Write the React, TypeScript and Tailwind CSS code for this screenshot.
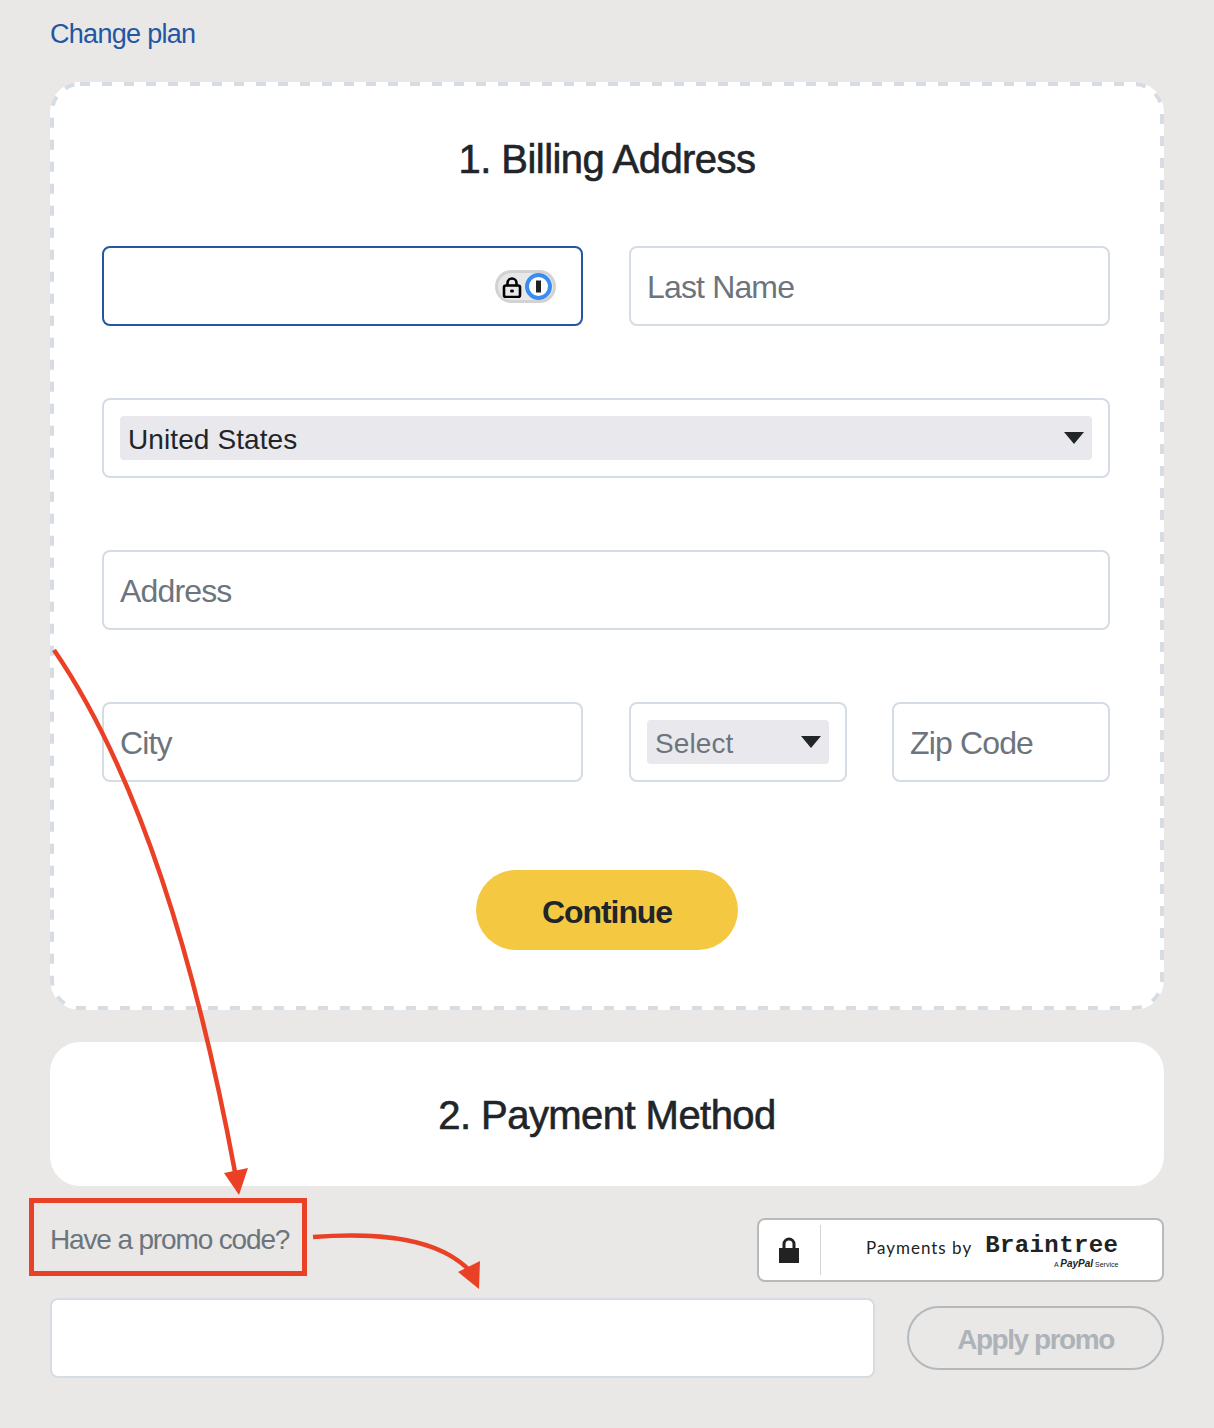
import React from 'react';

const sans = "font-['Liberation_Sans',Arial,sans-serif]";

const Field = ({ placeholder, className = '' }: { placeholder?: string; className?: string }) => (
  <div className={`h-20 rounded-lg border-2 border-[#d6dce3] bg-white px-4 pt-0.5 flex items-center ${className}`}>
    <span className="text-[32px] tracking-[-0.85px] text-[#6c757d]">{placeholder}</span>
  </div>
);

const Caret = () => (
  <svg width="20" height="12" viewBox="0 0 20 12" className="shrink-0">
    <path d="M0 0H20L10 12Z" fill="#212529" />
  </svg>
);

const OnePasswordBadge = () => (
  <div className="absolute right-[25px] top-[22px] flex h-[33px] w-[61px] items-center rounded-full border-[3px] border-[#d2d2d2] bg-[#e8e8e8]">
    <svg width="22" height="22" viewBox="0 0 22 22" className="ml-[3px]">
      <path d="M6.5 10V7a4.5 4.5 0 0 1 9 0v3" fill="none" stroke="#000" strokeWidth="2.6" />
      <rect x="3" y="9.5" width="16" height="11.5" rx="2" fill="none" stroke="#000" strokeWidth="2.6" />
      <rect x="9" y="13.5" width="4" height="3" rx="1.5" fill="#000" />
    </svg>
    <div className="ml-0.5 flex h-[27px] w-[27px] items-center justify-center rounded-full bg-white">
      <svg width="27" height="27" viewBox="0 0 27 27">
        <circle cx="13.5" cy="13.5" r="11.5" fill="#fff" stroke="#3b8cf0" strokeWidth="4" />
        <rect x="11" y="7.5" width="5" height="12" fill="#222" />
      </svg>
    </div>
  </div>
);

// dashed outline with longer dashes than the browser's own dashed border
const DashedOutline = () => (
  <svg className="pointer-events-none absolute left-0 top-0" width="1114" height="928" viewBox="0 0 1114 928">
    <rect x="2" y="2" width="1110" height="924" rx="28" fill="none" stroke="#d6dce3" strokeWidth="4" strokeDasharray="10 12" />
  </svg>
);

// red annotation arrows drawn over the page
const Annotations = () => (
  <svg className="pointer-events-none absolute left-0 top-0" width="1214" height="1428" viewBox="0 0 1214 1428">
    <path d="M54 650C128 758 190 930 235 1172" fill="none" stroke="#ea4126" strokeWidth="4.5" />
    <path d="M239 1195L224 1173L248 1168Z" fill="#ea4126" />
    <path d="M313 1237C380 1232 440 1238 471 1272" fill="none" stroke="#ea4126" strokeWidth="4.5" />
    <path d="M479 1289L458 1272L480 1261Z" fill="#ea4126" />
  </svg>
);

export default function App() {
  return (
    <div className={`relative min-h-[1428px] bg-[#e9e8e6] px-[50px] text-[#212529] ${sans}`}>
      <div className="flex h-[82px] items-start pt-[16px]">
        <a className="text-[27px] leading-9 tracking-[-0.7px] text-[#2356a4]">Change plan</a>
      </div>

      {/* Billing Address */}
      <section className="relative h-[928px] rounded-[30px] bg-white pl-[52px] pr-[54px] pt-[53px]">
        <DashedOutline />
        <h2 className="pl-[2px] text-center text-[40px] leading-[48px] font-normal tracking-[-0.55px] [-webkit-text-stroke:0.6px_#212529]">
          1. Billing Address
        </h2>

        <div className="mt-[63px] flex gap-x-[46px]">
          <div className="relative h-20 w-[481px] rounded-lg border-2 border-[#2356a4] bg-white">
            <OnePasswordBadge />
          </div>
          <Field placeholder="Last Name" className="w-[481px]" />
        </div>

        <div className="mt-[72px] flex h-20 items-center rounded-lg border-2 border-[#d6dce3] bg-white px-4">
          <div className="flex h-11 w-full items-center justify-between rounded bg-[#e8e8ed] pl-2 pr-2">
            <span className="pt-1 text-[28px] tracking-[0.1px]">United States</span>
            <Caret />
          </div>
        </div>

        <Field placeholder="Address" className="mt-[72px]" />

        <div className="mt-[72px] flex">
          <Field placeholder="City" className="w-[481px]" />
          <div className="ml-[46px] flex h-20 w-[218px] items-center rounded-lg border-2 border-[#d6dce3] bg-white px-4">
            <div className="flex h-11 w-full items-center justify-between rounded bg-[#e8e8ed] pl-2 pr-2">
              <span className="pt-1 text-[28px] tracking-[0.1px] text-[#6c757d]">Select</span>
              <Caret />
            </div>
          </div>
          <Field placeholder="Zip Code" className="ml-[45px] w-[218px]" />
        </div>

        <div className="mt-[88px] flex justify-center pl-[2px]">
          <button className="h-20 w-[262px] rounded-full bg-[#f5c842] pt-1 text-[32px] font-bold tracking-[-1.05px]">
            Continue
          </button>
        </div>
      </section>

      {/* Payment Method */}
      <section className="mt-8 flex h-[144px] items-center justify-center rounded-[30px] bg-white pt-0.5">
        <h2 className="text-[40px] leading-[48px] font-normal tracking-[-0.55px] [-webkit-text-stroke:0.6px_#212529]">
          2. Payment Method
        </h2>
      </section>

      {/* Promo */}
      <div className="mt-8 flex h-[64px] items-start justify-between">
        <span className="text-[28px] leading-[44px] tracking-[-1.15px] text-[#6c757d]">Have a promo code?</span>
        <div className="flex h-[64px] w-[407px] items-center rounded-lg border-2 border-[#b9b9b9] bg-white">
          <div className="flex h-[50px] w-[62px] items-center justify-center border-r border-[#d5d5d5] pr-[2px]">
            <svg width="22" height="26" viewBox="0 0 22 26">
              <path d="M6 12V7a5 5 0 0 1 10 0v5" fill="none" stroke="#222" strokeWidth="3" />
              <rect x="1" y="11" width="20" height="15" fill="#222" />
            </svg>
          </div>
          <div className="ml-[45px] flex items-start">
            <span className="mt-[3px] font-['Lato',sans-serif] text-[17px] tracking-[1px] text-[#222]">Payments by</span>
            <div className="ml-[13px] flex flex-col items-end">
              <span className="mt-[4px] font-['Liberation_Mono',monospace] text-[24px] leading-[20px] font-bold tracking-[0.4px] text-[#222]">
                Braintree
              </span>
              <span className="mt-[4px] text-[7px] leading-[8px] text-[#222]">
                A <b className="text-[10px] leading-[8px] italic">PayPal</b> Service
              </span>
            </div>
          </div>
        </div>
      </div>

      <div className="mt-[16px] flex items-center justify-between">
        <div className="h-20 w-[825px] rounded-lg border-2 border-[#d6dce3] bg-white" />
        <button className="h-[64px] w-[257px] rounded-full border-2 border-[#b4b9be] pt-1 text-[28px] font-bold tracking-[-1.45px] text-[#adb3b9]">
          Apply promo
        </button>
      </div>

      {/* annotation box round the promo label */}
      <div className="pointer-events-none absolute left-[29px] top-[1198px] h-[78px] w-[278px] border-[5px] border-[#ea4126]" />
      <Annotations />
    </div>
  );
}
